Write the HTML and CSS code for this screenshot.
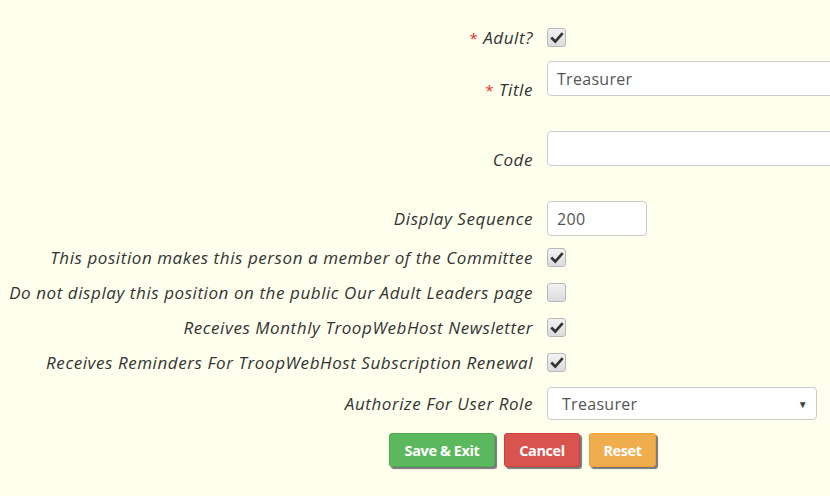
FILE: index.html
```html
<!DOCTYPE html>
<html>
<head>
<meta charset="utf-8">
<link rel="stylesheet" href="styles.css">
</head>
<body>
<div class="page">
  <form class="form">
    <div class="row row-check first">
      <label class="lbl"><span class="req">*</span> Adult?</label>
      <div class="ctl"><span class="cb on"><svg viewBox="0 0 16 16"><path d="M2.5 8.5 L6 12 L13.5 3.5" fill="none" stroke="#333" stroke-width="3" stroke-linecap="square"/></svg></span></div>
    </div>
    <div class="row row-text">
      <label class="lbl low"><span class="req">*</span> Title</label>
      <div class="ctl"><div class="input wide">Treasurer</div></div>
    </div>
    <div class="row row-text gap">
      <label class="lbl low">Code</label>
      <div class="ctl"><div class="input wide"></div></div>
    </div>
    <div class="row row-text gap mid">
      <label class="lbl">Display Sequence</label>
      <div class="ctl"><div class="input short">200</div></div>
    </div>
    <div class="row row-check">
      <label class="lbl">This position makes this person a member of the Committee</label>
      <div class="ctl"><span class="cb on"><svg viewBox="0 0 16 16"><path d="M2.5 8.5 L6 12 L13.5 3.5" fill="none" stroke="#333" stroke-width="3" stroke-linecap="square"/></svg></span></div>
    </div>
    <div class="row row-check">
      <label class="lbl">Do not display this position on the public Our Adult Leaders page</label>
      <div class="ctl"><span class="cb"></span></div>
    </div>
    <div class="row row-check">
      <label class="lbl">Receives Monthly TroopWebHost Newsletter</label>
      <div class="ctl"><span class="cb on"><svg viewBox="0 0 16 16"><path d="M2.5 8.5 L6 12 L13.5 3.5" fill="none" stroke="#333" stroke-width="3" stroke-linecap="square"/></svg></span></div>
    </div>
    <div class="row row-check">
      <label class="lbl">Receives Reminders For TroopWebHost Subscription Renewal</label>
      <div class="ctl"><span class="cb on"><svg viewBox="0 0 16 16"><path d="M2.5 8.5 L6 12 L13.5 3.5" fill="none" stroke="#333" stroke-width="3" stroke-linecap="square"/></svg></span></div>
    </div>
    <div class="row row-select">
      <label class="lbl">Authorize For User Role</label>
      <div class="ctl"><div class="select"><span>Treasurer</span><span class="arrow">▼</span></div></div>
    </div>
    <div class="buttons">
      <span class="btn green">Save &amp; Exit</span>
      <span class="btn red">Cancel</span>
      <span class="btn orange">Reset</span>
    </div>
  </form>
</div>
</body>
</html>
```
FILE: styles.css
```css
html, body {
  margin: 0;
  padding: 0;
  background: #ffffee;
  overflow: hidden;
}
.page {
  width: 830px;
  height: 496px;
  overflow: hidden;
  font-family: "Open Sans", "Lato", sans-serif;
}
.form {
  display: flex;
  flex-direction: column;
  padding-top: 20px;
}
.row {
  display: grid;
  grid-template-columns: 533px 1fr;
  column-gap: 14px;
  align-items: center;
}
.row.first { margin-bottom: 6px; }
.row-check { height: 35px; }
.row-text { height: 35px; align-items: start; }
.row-text.gap { margin-top: 35px; }
.row-text.mid { align-items: center; margin-bottom: 4px; }
.row-select { height: 32px; margin-top: 7px; }
.lbl {
  text-align: right;
  font-style: italic;
  font-size: 17px;
  line-height: 20px;
  letter-spacing: 0.57px;
  color: #333;
  white-space: nowrap;
}
.lbl.low { padding-top: 19px; }
.req { color: #e8302e; font-style: normal; font-size: 15px; }
.ctl { display: flex; align-items: center; min-width: 0; }
.cb {
  box-sizing: border-box;
  width: 19px;
  height: 19px;
  border: 1px solid #b8b8b8;
  border-radius: 3px;
  background: linear-gradient(#f2f2f2, #dcdcdc);
  display: flex;
  align-items: center;
  justify-content: center;
}
.cb svg { width: 14px; height: 14px; }
.input {
  box-sizing: border-box;
  height: 35px;
  background: #fff;
  border: 1px solid #ccc;
  border-radius: 4px;
  padding: 0 9px;
  display: flex;
  align-items: center;
  font-size: 16px;
  letter-spacing: 0.3px;
  color: #555;
}
.input.wide { width: 320px; flex: none; }
.input.short { width: 100px; }
.select {
  box-sizing: border-box;
  width: 270px;
  height: 33px;
  background: #fff;
  border: 1px solid #ccc;
  border-radius: 4px;
  padding: 0 8px 0 14px;
  display: flex;
  align-items: center;
  justify-content: space-between;
  font-size: 16px;
  letter-spacing: 0.3px;
  color: #555;
}
.arrow { font-size: 10px; color: #444; }
.buttons {
  display: flex;
  gap: 9px;
  padding-left: 389px;
  margin-top: 14px;
}
.btn {
  box-sizing: border-box;
  height: 34px;
  display: flex;
  align-items: center;
  justify-content: center;
  color: #fff;
  font-weight: bold;
  font-size: 14.5px;
  border-radius: 3px;
  box-shadow: 2px 2px 1px #777;
  letter-spacing: -0.4px;
}
.green { background: #5cb85c; width: 106px; border: 1px solid #4cae4c; }
.red { background: #d9534f; width: 76px; border: 1px solid #d43f3a; }
.orange { background: #f0ad4e; width: 67px; border: 1px solid #eea236; }
```
